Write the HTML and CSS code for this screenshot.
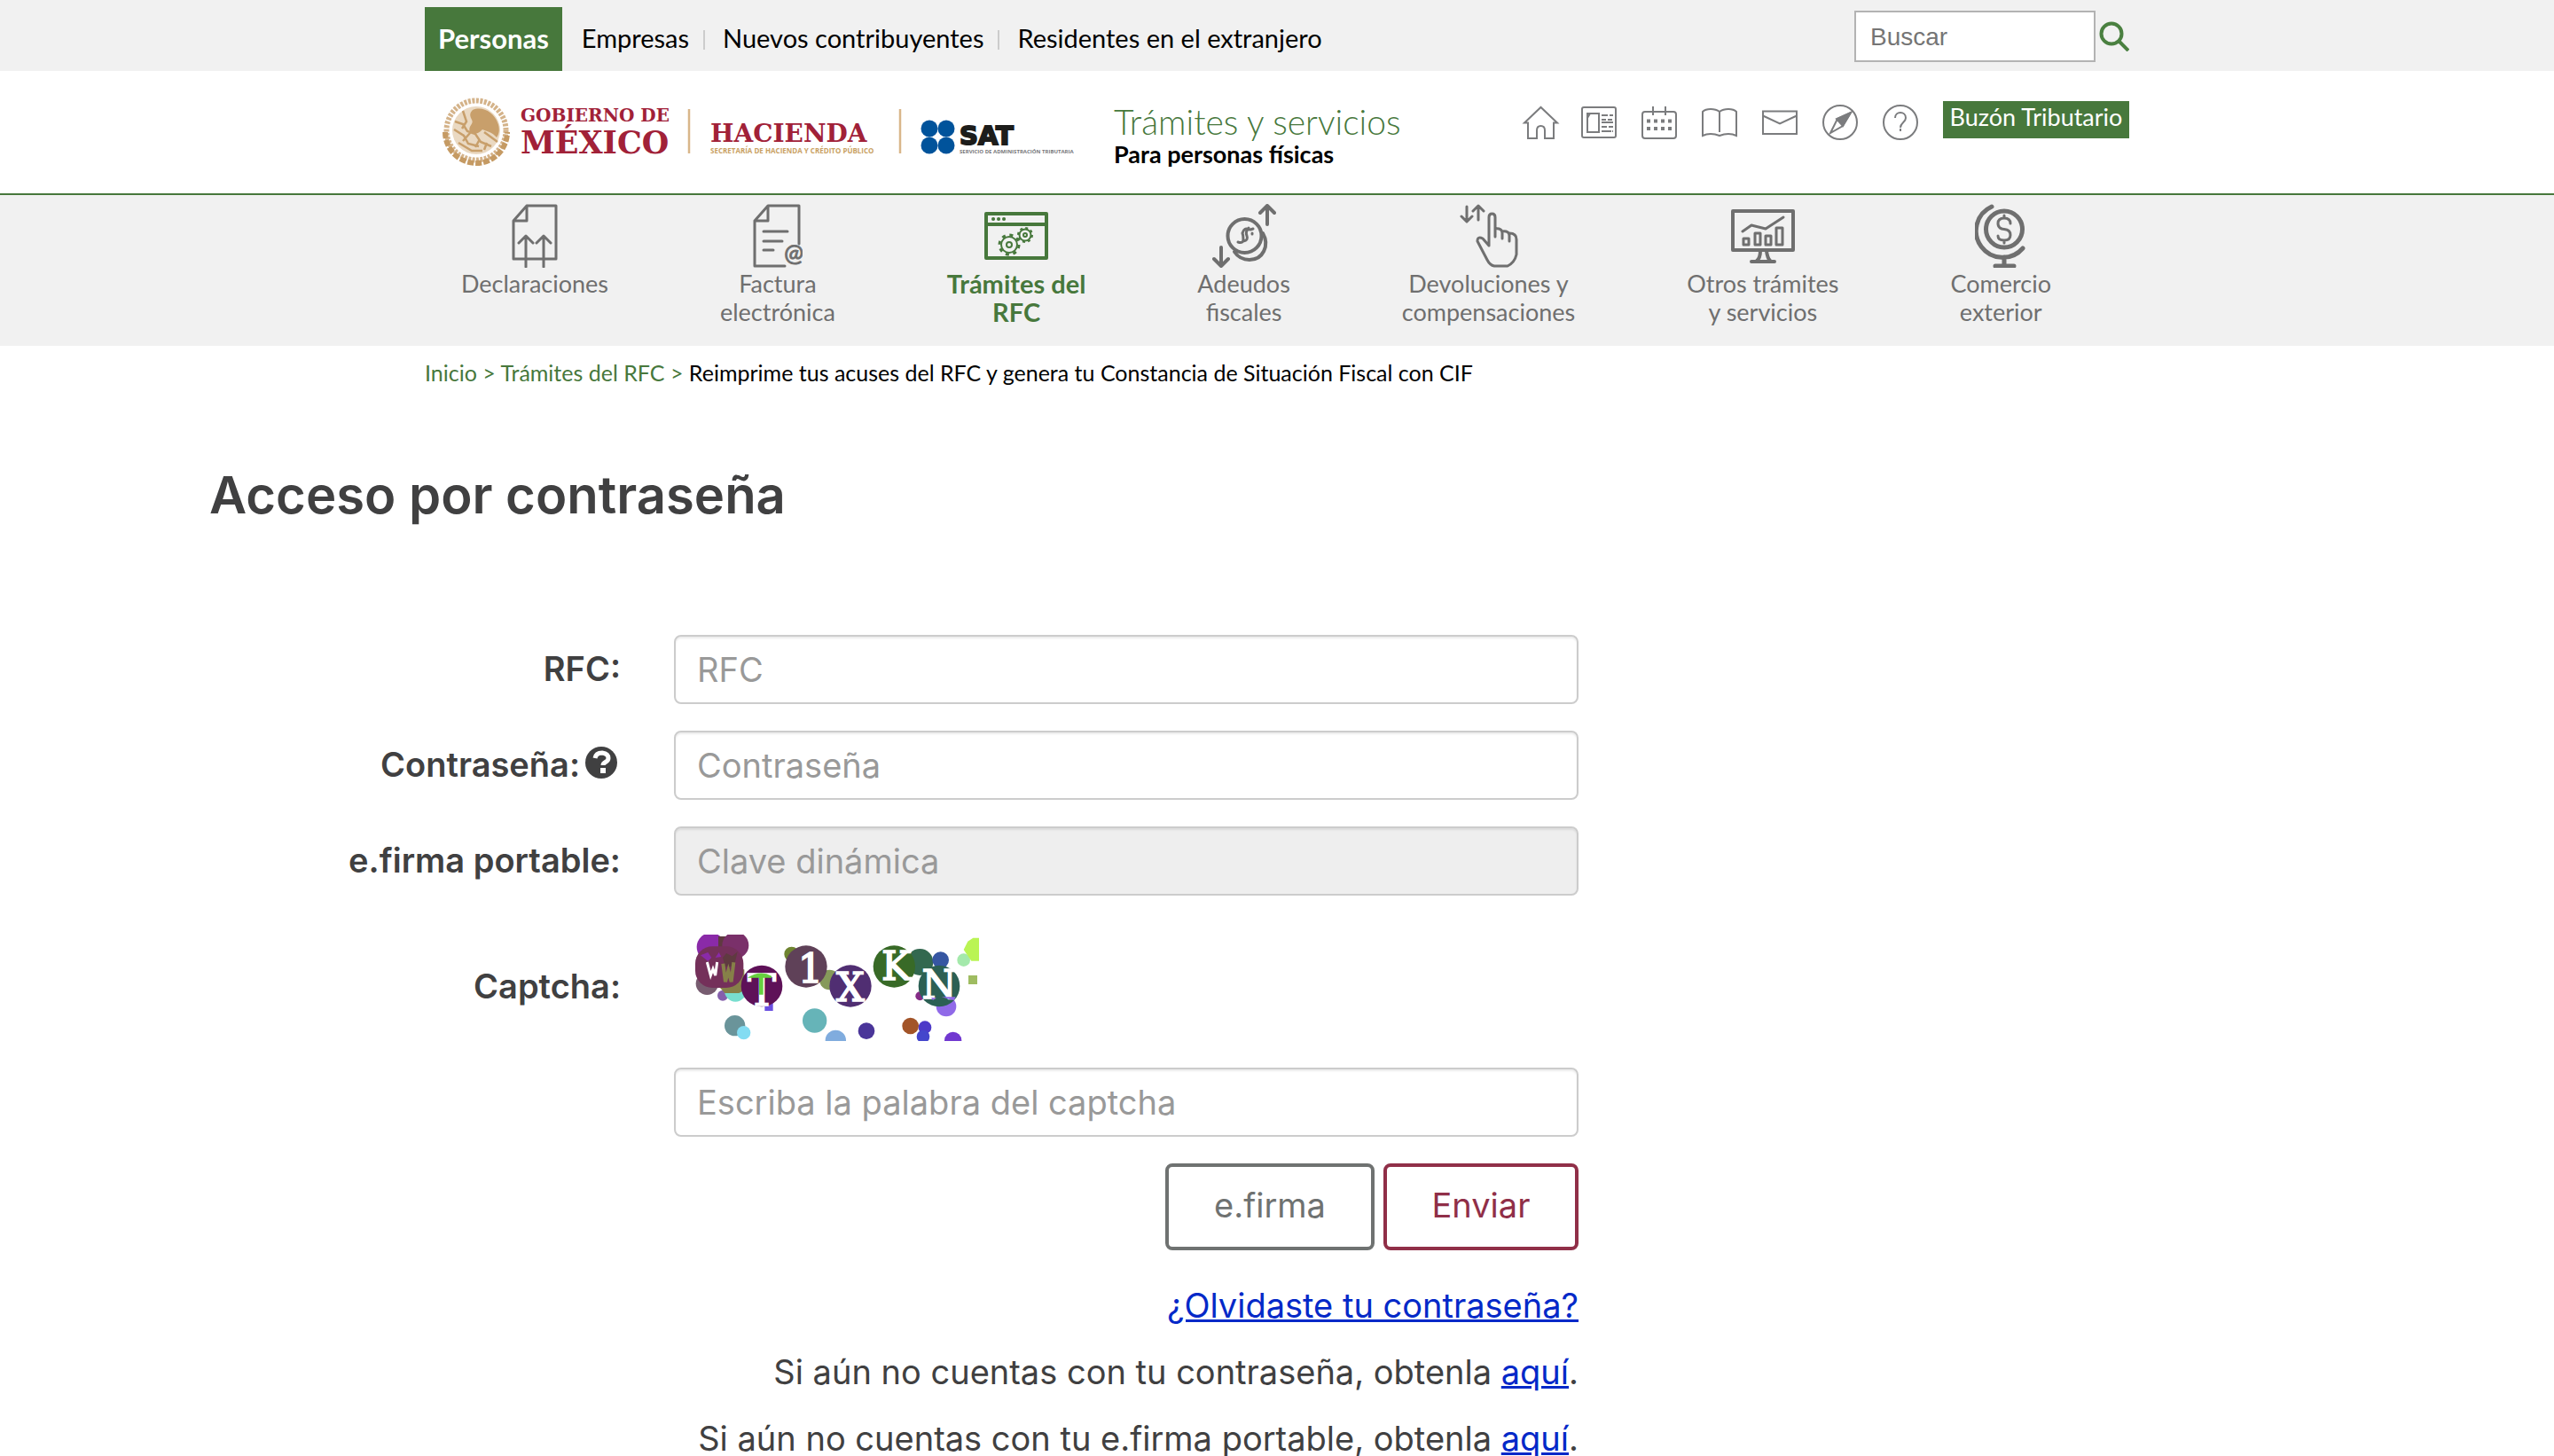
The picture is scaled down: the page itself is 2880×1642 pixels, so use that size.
FILE: index.html
```html
<!DOCTYPE html>
<html lang="es">
<head>
    <meta charset="UTF-8">
    <meta name="viewport" content="width=device-width, initial-scale=1.0">
    <title>Acceso por contraseña</title>
    <link rel="stylesheet" href="styles.css">
</head>
<body>
    <div class="topbar">
        <div class="wrap topbar-inner">
            <nav class="audience">
                <a class="active" href="#">Personas</a>
                <a href="#">Empresas</a>
                <a href="#">Nuevos contribuyentes</a>
                <a href="#">Residentes en el extranjero</a>
            </nav>
            <form class="search">
                <input type="text" placeholder="Buscar" aria-label="Buscar">
                <button type="submit" aria-label="Buscar">
                    <svg width="34" height="34" viewBox="0 0 34 34" fill="none" stroke="#4a8040" stroke-width="4">
                        <circle cx="14" cy="14" r="11.5"/>
                        <path d="M22 22l11 11"/>
                    </svg>
                </button>
            </form>
        </div>
    </div>

    <header class="header">
        <div class="wrap header-inner">
            <a class="logos" href="#" aria-label="Gobierno de México, Hacienda, SAT">
                <svg width="720" height="84" viewBox="496 106 720 84">
                    <!-- escudo -->
                    <g fill="none" stroke="#c59a63">
                        <circle cx="537" cy="147" r="33.5" stroke-width="6" stroke-dasharray="3 1.5" opacity=".75"/>
                        <path d="M502 149a35 35 0 0 0 70 0" stroke-width="6" stroke-dasharray="7 2"/>
                    </g>
                    <circle cx="537" cy="147" r="27" fill="#ead9c2"/>
                    <path d="M533 124c11-5 24 3 28 14 3 7 2 13-1 17-5-6-11-7-16-9-4 5-10 6-14 3-3-7 5-9 2-14-2-4-3-7 1-11z" fill="#c89f6b"/>
                    <path d="M513 137l9 3 5 8 9 3 6 9 12 5M512 146l11 7 5 9 12 3M522 125l4 12-5 8M517 161l15 9h12M546 149l15 11M530 150l-8 9M541 157l-5 9M549 161l-3 8" fill="none" stroke="#c89f6b" stroke-width="2.5"/>
                    <g class="logo-serif" fill="#a12138">
                        <text x="587" y="137" font-size="20">GOBIERNO DE</text>
                        <text x="587" y="173" font-size="35">MÉXICO</text>
                        <text x="801" y="160" font-size="28">HACIENDA</text>
                    </g>
                    <path d="M777 123v50M1015 123v50" stroke="#d9b68a" stroke-width="2.5"/>
                    <text class="logo-sans" x="801" y="173" font-size="8" fill="#c9a163">SECRETARÍA DE HACIENDA Y CRÉDITO PÚBLICO</text>
                    <g fill="#00539b">
                        <circle cx="1048" cy="145" r="9.5"/>
                        <circle cx="1067" cy="145" r="9.5"/>
                        <circle cx="1048" cy="164" r="9.5"/>
                        <circle cx="1067" cy="164" r="9.5"/>
                    </g>
                    <text class="logo-sat" x="1082" y="163" font-size="29">SAT</text>
                    <text class="logo-sans" x="1082" y="173" font-size="6" fill="#77777a">SERVICIO DE ADMINISTRACIÓN TRIBUTARIA</text>
                </svg>
            </a>
            <div class="site-name">
                <div class="site-title">Trámites y servicios</div>
                <div class="site-sub">Para personas físicas</div>
            </div>
            <div class="tools">
                <a href="#" aria-label="Inicio"><svg viewBox="0 0 40 40"><path d="M4 20.500L22.500 3 41 20.500h-4V38h-10V29q0-5-4.500-5T18 29v9H8V20.500z"/></svg></a>
                <a href="#" aria-label="Noticias"><svg viewBox="0 0 40 40"><rect x="1" y="3" width="38" height="34" rx="2"/><path d="M7 31V10h13v21zM7 15l3-5M23 12h7M32 12h4M23 17h5M30 17h5M23 20h13M23 25h6M31 25h5M23 30h11M35 30h1"/></svg></a>
                <a href="#" aria-label="Calendario"><svg viewBox="0 0 40 40"><rect x="1" y="8" width="38" height="30" rx="3"/><path d="M13 2v10M27 2v10"/><path d="M6 18.500h28M6 27h28" stroke-width="4" stroke-dasharray="4 4"/></svg></a>
                <a href="#" aria-label="Biblioteca"><svg viewBox="0 0 40 40"><path d="M20 31V8Q16 5 10 5T1 8v27q4-2 9-2t10 2q5-2 10-2t9 2V8q-3-3-9-3T20 8"/></svg></a>
                <a href="#" aria-label="Correo"><svg viewBox="0 0 40 40"><path d="M1 7.500h38V33H1zM1 12.500l19 9 19-9"/></svg></a>
                <a href="#" aria-label="Orientación"><svg viewBox="0 0 40 40"><circle cx="20" cy="20" r="19"/><path d="M32 9l-9 15-14 8 8-16z"/><path d="M32 9l-9 15-7-8z" fill="#7b7c7e"/></svg></a>
                <a href="#" aria-label="Ayuda"><svg viewBox="0 0 40 40"><circle cx="20" cy="20" r="19"/><path d="M14 15c0-4 3-6 6-6s6 2 6 6c0 5-6 5-6 11M20 27v3"/></svg></a>
                <a class="buzon" href="#">Buzón Tributario</a>
            </div>
        </div>
    </header>

    <nav class="menu">
        <div class="wrap menu-inner">
            <a href="#">
                <svg width="52" height="72" viewBox="0 0 52 72"><path d="M17 2h33v60H2V19L17 2v17H2M16 71V37M8 44l8-8 8 8M36 71V37M28 44l8-8 8 8"/></svg>
                <span>Declaraciones</span>
            </a>
            <a href="#">
                <svg width="56" height="72" viewBox="0 0 56 72"><path d="M52 45V2H17L2 19h15V2M2 19v51h34M12 31h27M12 42h21M12 52h11"/><text x="46" y="65" text-anchor="middle" font-size="26" fill="#6f6f6f" stroke="#6f6f6f" stroke-width="1">@</text></svg>
                <span>Factura<br>electrónica</span>
            </a>
            <a class="active" href="#">
                <svg width="72" height="72" viewBox="0 0 72 72"><path d="M2 11h68v50H2zM2 23h68" stroke-width="4"/><path d="M10 17h.1M16 17h.1M22 17h.1" stroke-width="4"/>
                    <g stroke-width="2"><circle cx="28" cy="46" r="3"/><circle cx="28" cy="46" r="9"/><circle cx="28" cy="46" r="11" stroke-dasharray="4 4.640" stroke-width="3" stroke-linecap="butt"/><circle cx="46" cy="35" r="2"/><circle cx="46" cy="35" r="6.500"/><circle cx="46" cy="35" r="8" stroke-dasharray="3 3.280" stroke-linecap="butt"/></g></svg>
                <span>Trámites del<br>RFC</span>
            </a>
            <a href="#">
                <svg width="72" height="72" viewBox="0 0 72 72"><path d="M62 23V3M54 10l8-8 8 8M10 49v20M2 62l8 8 8-8" stroke-width="4"/><circle cx="36.500" cy="36" r="19" stroke-width="4"/><path d="M57 33c8 14 0 30-15 30-8 0-13-3-17-9" stroke-width="4"/><path d="M29 43q6 2 6-3t-1-7q2-7 7-4M35 42q6-1 4-6t2-9M43 29l3-1M45 33v1" stroke-width="3"/></svg>
                <span>Adeudos<br>fiscales</span>
            </a>
            <a href="#">
                <svg width="66" height="72" viewBox="0 0 66 72"><path d="M8 3v16M2 14l6 6 6-6M21 18V3M15 8l6-6 6 6M33 47V15q0-4 3.500-4t3.500 4v22M40 28q8-1 8 5v6M48 31q8-1 8 5v6M56 33q8 0 8 7v17q-2 9-10 13H39q-5-1-8-7L20 42q0-6 6-3l7 8"/></svg>
                <span>Devoluciones y<br>compensaciones</span>
            </a>
            <a href="#">
                <svg width="72" height="72" viewBox="0 0 72 72"><path d="M2 8h68v44H2zM23 65h26M33 53q0 8-4 11M40 53q1 8 4 11" stroke-width="4"/><path d="M13 31l10-7 16 4 20-13"/><path d="M14 39h6v7h-6zM27 33h6v13h-6zM39 36h6v10h-6zM51 27h7v19h-7z"/></svg>
                <span>Otros trámites<br>y servicios</span>
            </a>
            <a href="#">
                <svg width="58" height="72" viewBox="0 0 58 72"><circle cx="33" cy="28.500" r="20.500" stroke-width="5"/><path d="M19 3A30 30 0 1 0 54 50M33 60v8M23 70h21" stroke-width="5"/><path d="M40 22q0-6-7-6t-7 6 7 6.500 7 6.500-7 6-7-5M33 13v3M33 41v3"/></svg>
                <span>Comercio<br>exterior</span>
            </a>
        </div>
    </nav>

    <div class="wrap breadcrumb">
        <a href="#">Inicio</a> <i>&gt;</i> <a href="#">Trámites del RFC</a> <i>&gt;</i> Reimprime tus acuses del RFC y genera tu Constancia de Situación Fiscal con CIF
    </div>

    <main class="main">
        <h1>Acceso por contraseña</h1>
        <form class="login">
            <label for="rfc">RFC:</label>
            <input type="text" id="rfc" placeholder="RFC">

            <label for="password">Contraseña:<svg class="help" width="36" height="36" viewBox="0 0 36 36"><circle cx="18" cy="18" r="18" fill="#404041"/><path d="M11 13q1-6 8-6 7 1 7 6c0 5-6 4-6 8" fill="none" stroke="#fff" stroke-width="5"/><path d="M17 24h6v6h-6z" fill="#fff"/></svg></label>
            <input type="password" id="password" placeholder="Contraseña">

            <label for="clave">e.firma portable:</label>
            <input type="text" id="clave" placeholder="Clave dinámica" disabled>

            <label class="captcha-label" for="captcha">Captcha:</label>
            <svg class="captcha" width="320" height="120" viewBox="132 72 960 360">
                <circle cx="172" cy="238" r="38" fill="#775c70"/>
                <circle cx="225" cy="278" r="18" fill="#8560ac"/>
                <circle cx="268" cy="262" r="37" fill="#78decf"/>
                <path d="M220 190h78v70l-18 10h-48l-18-20z" fill="#868048"/>
                <circle cx="185" cy="114" r="48" fill="#8a2aa8"/>
                <path d="M210 78h60v110h-60z" fill="#5f3a40"/>
                <circle cx="268" cy="108" r="45" fill="#7a306a"/>
                <rect x="132" y="112" width="163" height="140" rx="58" fill="#74305a"/>
                <path d="M150 142l25-10 12 18-12 12zM200 150l12-18 8 15z" fill="#8a2aa8"/>
                <path d="M225 150l12-15 20 10 18-15-12 50h-30z" fill="#5f3a40"/>
                <path d="M172 165l12 45 8-22 8 22 6-45" fill="none" stroke="#fff" stroke-width="9"/>
                <path d="M226 170l8 62 10-38 10 38 8-66" fill="none" stroke="#868048" stroke-width="12"/>
                <path d="M367 300h28v30h-28z" fill="#6a4fe0"/>
                <circle cx="357" cy="246" r="70" fill="#5e1158"/>
                <text x="357" y="311" font-size="144">T</text>
                <path d="M308 218q45-28 82-6v6h-28v57h-14v-57z" fill="#66d03f"/>
                <circle cx="458" cy="138" r="25" fill="#6f8430"/>
                <circle cx="586" cy="225" r="34" fill="#869a5a"/>
                <circle cx="507" cy="180" r="71" fill="#5f4158"/>
                <text x="522" y="233" font-size="134">1</text>
                <circle cx="657" cy="246" r="71" fill="#502e72"/>
                <text x="657" y="298" font-size="134">X</text>
                <circle cx="892" cy="165" r="45" fill="#33684f"/>
                <circle cx="805" cy="180" r="71" fill="#386a27"/>
                <text x="812" y="226" font-size="134">K</text>
                <circle cx="962" cy="158" r="28" fill="#3656a2"/>
                <circle cx="892" cy="280" r="15" fill="#842c86"/>
                <circle cx="981" cy="315" r="34" fill="#906ae8"/>
                <circle cx="957" cy="246" r="70" fill="#2c6054"/>
                <text x="957" y="289" font-size="134">N</text>
                <path d="M930 286h18l-12 8zM965 283h48l-6 12z" fill="#906ae8"/>
                <circle cx="1040" cy="158" r="22" fill="#a4e9ab"/>
                <path d="M1040 123l14-28 18-12h20v78h-26z" fill="#baf454"/>
                <path d="M1056 210h30v30h-30z" fill="#9fbc61"/>
                <circle cx="266" cy="380" r="35" fill="#6a949a"/>
                <circle cx="296" cy="404" r="23" fill="#83dcf2"/>
                <circle cx="536" cy="363" r="41" fill="#66b4b8"/>
                <circle cx="607" cy="430" r="35" fill="#80acde"/>
                <circle cx="711" cy="398" r="28" fill="#4a3599"/>
                <circle cx="860" cy="381" r="28" fill="#a25428"/>
                <circle cx="909" cy="386" r="22" fill="#4d3ac8"/>
                <circle cx="903" cy="417" r="22" fill="#4446cc"/>
                <circle cx="1004" cy="430" r="29" fill="#7138d0"/>
            </svg>

            <input class="second" type="text" id="captcha" placeholder="Escriba la palabra del captcha">

            <div class="actions second">
                <button type="button">e.firma</button>
                <button type="submit" class="primary">Enviar</button>
            </div>

            <div class="notes">
                <p><a href="#">¿Olvidaste tu contraseña?</a></p>
                <p>Si aún no cuentas con tu contraseña, obtenla <a href="#">aquí</a>.</p>
                <p>Si aún no cuentas con tu e.firma portable, obtenla <a href="#">aquí</a>.</p>
            </div>
        </form>
    </main>
</body>
</html>
```

FILE: styles.css
```css
* {
    box-sizing: border-box;
}

body {
    margin: 0;
    background: #fff;
    color: #404041;
    font-family: Lato, "Open Sans", sans-serif;
}

a {
    text-decoration: none;
}

.wrap {
    width: 100%;
    max-width: 1922px;
    margin: 0 auto;
}

/* barra superior */
.topbar {
    background: #f1f1f1;
}

.topbar-inner {
    display: flex;
    justify-content: space-between;
    height: 80px;
}

.audience {
    display: flex;
    padding-top: 8px;
}

.audience a {
    position: relative;
    padding: 0 16px 0 22px;
    font-size: 29px;
    line-height: 70px;
    color: #000;
}

.audience .active {
    padding: 0 15px;
    background: #47783c;
    color: #fff;
    font-size: 31px;
    font-weight: bold;
}

.audience a:nth-child(n+3)::before {
    content: "";
    position: absolute;
    left: 0;
    top: 26px;
    width: 2px;
    height: 22px;
    background: #ccc;
}

.search {
    display: flex;
    align-items: center;
    gap: 4px;
    padding-top: 2px;
}

.search input {
    width: 272px;
    height: 58px;
    padding: 2px 16px 0;
    border: 2px solid #b3b3b3;
    background: #fff;
    font-family: "Liberation Sans", Arial, sans-serif;
    font-size: 28px;
}

.search input::placeholder {
    color: #757575;
}

.search button {
    display: flex;
    padding: 0;
    border: 0;
    background: none;
}

/* encabezado */
.header {
    border-bottom: 2px solid #47783c;
}

.header-inner {
    display: flex;
    height: 138px;
    padding-top: 26px;
}

.logos {
    margin-left: 17px;
}

.logo-serif {
    font-family: "DejaVu Serif", serif;
    font-weight: bold;
}

.logo-sans {
    font-family: "Open Sans", sans-serif;
    font-weight: bold;
}

.logo-sat {
    font-family: "DejaVu Sans", sans-serif;
    font-weight: bold;
    fill: #1d1d1b;
    stroke: #1d1d1b;
    stroke-width: 2px;
}

.site-name {
    margin-left: 40px;
    padding-top: 8px;
}

.site-title {
    font-size: 39px;
    font-weight: 300;
    line-height: 46px;
    color: #47783c;
}

.site-sub {
    font-size: 27px;
    font-weight: bold;
    line-height: 28px;
    color: #000;
}

.tools {
    display: flex;
    align-items: flex-start;
    gap: 28px;
    margin-left: auto;
    padding-top: 12px;
}

.tools svg {
    display: block;
    width: 40px;
    height: 40px;
    overflow: visible;
    fill: none;
    stroke: #7b7c7e;
    stroke-width: 2;
}

.tools .buzon {
    width: 210px;
    height: 42px;
    margin-top: -4px;
    background: #47783c;
    color: #fff;
    font-size: 27px;
    line-height: 36px;
    text-align: center;
    white-space: nowrap;
}

/* menu principal */
.menu {
    background: #f1f1f1;
}

.menu-inner {
    display: flex;
    justify-content: space-between;
    height: 170px;
    padding: 10px 88px 0 41px;
}

.menu a {
    display: flex;
    flex-direction: column;
    align-items: center;
    font-size: 27px;
    line-height: 32px;
    color: #6f6f6f;
    text-align: center;
}

.menu span {
    margin-top: 2px;
}

.menu svg {
    fill: none;
    stroke: #6f6f6f;
    stroke-width: 3;
    stroke-linejoin: round;
    stroke-linecap: round;
}

.menu .active {
    color: #47783c;
    font-size: 29px;
    font-weight: bold;
}

.menu .active svg {
    stroke: #47783c;
}

.breadcrumb {
    padding-top: 14px;
    font-size: 25px;
    line-height: 32px;
    color: #000;
}

.breadcrumb a,
.breadcrumb i {
    color: #47783c;
    font-style: normal;
}

/* formulario */
.main {
    padding: 0 236px;
    font-family: Inter, "Open Sans", sans-serif;
}

h1 {
    margin: 88px 0 124px;
    font-size: 58px;
    font-weight: 600;
    line-height: 68px;
}

.login {
    display: grid;
    grid-template-columns: 464px 1fr;
    column-gap: 60px;
    row-gap: 30px;
    max-width: 1544px;
}

.login label {
    display: flex;
    align-items: center;
    justify-content: flex-end;
    padding-bottom: 3px;
    font-size: 38px;
    font-weight: 600;
}

.login .captcha-label {
    padding: 10px 0 0;
}

.login .help {
    margin: 0 4px 4px 6px;
}

.login input {
    width: 100%;
    height: 78px;
    padding: 0 24px;
    border: 2px solid #ccc;
    border-radius: 8px;
    background: #fff;
    box-shadow: inset 0 2px 2px rgba(0, 0, 0, 0.075);
    font-family: inherit;
    font-size: 38px;
}

.login input::placeholder {
    color: #999;
}

.login input:disabled {
    background: #eee;
}

.second {
    grid-column: 2;
}

.captcha {
    margin: 14px 0 0 24px;
    font-family: "DejaVu Serif", serif;
    fill: #fff;
    text-anchor: middle;
}

.captcha text {
    stroke: #fff;
    stroke-width: 5px;
}

.actions {
    display: flex;
    justify-content: flex-end;
    gap: 10px;
}

.actions button {
    width: 236px;
    height: 98px;
    padding: 0 0 4px;
    border: 4px solid #6f7271;
    border-radius: 8px;
    background: #fff;
    color: #6f7271;
    font-family: inherit;
    font-size: 38px;
}

.actions .primary {
    width: 220px;
    border-color: #902f48;
    color: #902f48;
}

.notes {
    grid-column: 1 / -1;
    text-align: right;
    font-size: 38px;
    line-height: 48px;
}

.notes p {
    margin: 8px 0 27px;
}

.notes p + p {
    margin-top: 0;
}

.notes a {
    color: #0429c8;
    text-decoration: underline;
}
```
